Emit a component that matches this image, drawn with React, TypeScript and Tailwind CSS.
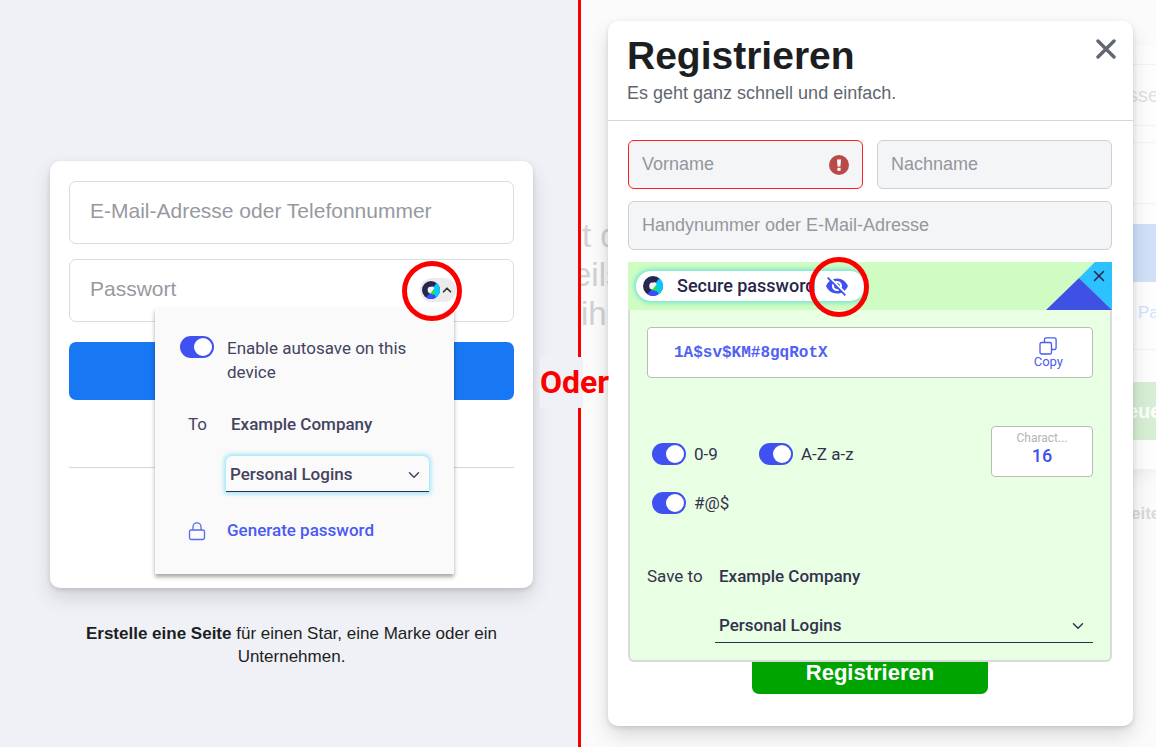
import React, { useState } from 'react';
import { ChevronDown, ChevronUp, X } from 'lucide-react';
import { MdVisibilityOff } from 'react-icons/md';

interface SwitchProps {
  id: string;
  label: string;
  className?: string;
}

const Switch: React.FC<SwitchProps> = ({ id, label, className = '' }) => {
  const [on, setOn] = useState(true);

  return (
    <div className={`flex ${className}`}>
      <input
        id={id}
        type="checkbox"
        role="switch"
        checked={on}
        onChange={() => setOn(!on)}
        className="w-[34px] h-[22px] shrink-0 appearance-none rounded-full bg-gray-400 checked:bg-[#3f51f0] before:block before:size-[18px] before:rounded-full before:bg-white before:m-[2px] checked:before:ml-[14px]"
      />
      <label htmlFor={id}>{label}</label>
    </div>
  );
};

const BrandIcon = ({ className = '' }: { className?: string }) => (
  <svg viewBox="0 0 20 20" className={className} aria-hidden="true">
    <circle cx="10" cy="10" r="10" fill="#26264f" />
    <path d="M10 10 L16.4 2.3 A10 10 0 0 1 15.6 18.3 Z" fill="#0dc5ff" />
    <path d="M10 12 L15.6 18.3 A10 10 0 0 1 4.4 18.3 Z" fill="#3f4bff" />
    <path d="M13.4 7 L14 15.5 L8 13.5 Z" fill="#1bea3c" />
    <path d="M7.6 6.8 L12.4 6.2 L13.6 8.4 L9.6 13.6 L6.6 12.4 L6.2 9 Z" fill="#f4f4f8" />
  </svg>
);

const ErrorIcon = () => (
  <svg viewBox="0 0 20 20" className="absolute right-[14px] top-[15px] size-5" aria-hidden="true">
    <circle cx="10" cy="10" r="10" fill="#b94a48" />
    <path d="M8 4.5h4l-.6 7H8.6z" fill="#fff" />
    <rect x="8.4" y="12.8" width="3.2" height="3" fill="#fff" />
  </svg>
);

const CopyIcon = () => (
  <svg viewBox="0 0 18 18" className="size-[18px]" fill="none" stroke="#4a5cf0" strokeWidth="1.3" aria-hidden="true">
    <rect x="1" y="5.5" width="11.5" height="11.5" rx="1.6" />
    <path d="M5.5 5.5V2.4A1.5 1.5 0 0 1 7 .9h8.6a1.5 1.5 0 0 1 1.5 1.5V11a1.5 1.5 0 0 1-1.5 1.5h-3.1" />
  </svg>
);

const LockIcon = () => (
  <svg viewBox="0 0 18 20" className="w-[18px] h-5" fill="none" stroke="#5a69f2" strokeWidth="1.3" aria-hidden="true">
    <rect x="1.5" y="9" width="15" height="9.5" rx="1.8" />
    <path d="M5 9V5.8a4 4 0 0 1 8 0V9" />
  </svg>
);

// red ring that highlights a control
const Ring = ({ className = '' }: { className?: string }) => (
  <span className={`absolute size-[60px] rounded-full border-5 border-[#fc0000] pointer-events-none ${className}`} />
);

const VaultSelect = ({ label, className = '' }: { label: string; className?: string }) => (
  <div className="relative">
    <select
      aria-label={label}
      className={`block w-full appearance-none border-b border-[#2f2d52] pl-1 font-medium outline-none ${className}`}
    >
      <option>Personal Logins</option>
    </select>
    <ChevronDown className="absolute right-[6px] top-[10px] size-[18px] pointer-events-none" strokeWidth={2} />
  </div>
);

const AutosavePopup = () => (
  <div className="absolute left-[105px] top-[147px] w-[299px] h-[266px] bg-[#fafafa] px-[25px] pt-[28px] shadow-[0_3px_4px_rgba(0,0,0,0.35)] font-[Roboto,sans-serif] text-[17px] leading-6 text-[#45435f]">
    <Switch id="autosave" label="Enable autosave on this device" className="gap-[13px]" />
    <div className="grid grid-cols-[46px_1fr] mt-[28px]">
      <span className="pl-2">To</span>
      <span className="pl-[5px] font-medium">Example Company</span>
    </div>
    <div className="ml-[46px] mt-5">
      <VaultSelect
        label="Vault"
        className="h-9 rounded-t-md bg-[#fafafa] shadow-[0_0_4px_2px_rgba(64,212,245,0.5)]"
      />
    </div>
    <button className="mt-[26px] grid grid-cols-[47px_auto] text-left font-medium text-[#4b5bf2]">
      <span className="pl-2 pt-[3px]"><LockIcon /></span>
      Generate password
    </button>
  </div>
);

const loginFieldClass =
  'block w-full h-[63px] rounded-[7px] border border-[#d9dce0] pl-5 pb-[3px] text-[21px] placeholder:text-[#97999f]';

const LoginSide = () => (
  <section className="w-1/2 bg-[#eff1f6] pt-[161px] pl-[50px] pr-[45px]">
    <div className="relative h-[427px] rounded-[10px] bg-white px-[19px] pt-5 shadow-[0_10px_20px_rgba(0,0,0,0.12),0_2px_5px_rgba(0,0,0,0.12)]">
      <input
        type="text"
        aria-label="E-Mail-Adresse oder Telefonnummer"
        placeholder="E-Mail-Adresse oder Telefonnummer"
        className={loginFieldClass}
      />
      <input
        type="password"
        aria-label="Passwort"
        placeholder="Passwort"
        className={`${loginFieldClass} mt-[15px]`}
      />
      <button aria-label="Anmelden" className="mt-5 block w-full h-[58px] rounded-[7px] bg-[#1877f2]" />
      <hr className="mt-[67px] border-[#d3d6da]" />

      <AutosavePopup />
      <button
        aria-label="Autosave"
        className="absolute right-[77px] top-[117px] flex h-6 w-9 items-center justify-center rounded-full bg-[#ebebeb]"
      >
        <BrandIcon className="size-[18px]" />
        <ChevronUp className="size-[14px] text-[#333]" strokeWidth={3} />
      </button>
      <Ring className="right-[71px] top-[100px]" />
    </div>

    <p className="mt-[34px] px-6 text-center text-[17px] leading-[23px] text-[#1c1e21]">
      <a href="#" className="font-bold">Erstelle eine Seite</a> für einen Star, eine Marke oder ein Unternehmen.
    </p>
  </section>
);

// faded login page behind the dialog
const Backdrop = () => (
  <div className="absolute inset-0 flex justify-between overflow-hidden bg-[#fbfbfb]" aria-hidden="true">
    <div className="w-8 whitespace-nowrap pt-[216px] text-[33px] leading-[39px] text-[#d0d1d2]">
      <p className="pl-px">t d</p>
      <p className="-ml-2">eils</p>
      <p>ihn</p>
    </div>
    <div className="w-9 pt-[45px] text-[20px] whitespace-nowrap">
      <div className="h-[424px] bg-[#fdfdfd] shadow-[0_8px_16px_rgba(0,0,0,0.05)]">
        <div className="pt-[19px]">
          <div className="h-[62px] border-y border-[#f3f3f4] pl-2 leading-[60px] text-[#dfe0e1]">sse</div>
          <div className="mt-4 h-[62px] border-y border-[#f3f3f4]" />
        </div>
        <div className="mt-5 h-[58px] bg-[#cfe0f8]" />
        <p className="mt-[19px] pl-[18px] text-[17px] leading-6 text-[#d0e3fc]">Pa</p>
        <div className="mt-6 border-t border-[#f3f3f4]" />
        <div className="mt-8 h-[58px] bg-[#d6efd4] pl-[7px] font-bold leading-[58px] text-white">eue</div>
      </div>
      <p className="mt-[33px] pl-[11px] text-[17px] leading-6 font-bold text-[#d8d9da]">eite</p>
    </div>
  </div>
);

const PasswordPanel = () => (
  <div className="relative z-10 mt-3 font-[Roboto,sans-serif] text-[17px] leading-6 text-[#33324e]">
    <div className="flex h-12 items-center justify-between bg-[#cffcc3] pl-2">
      <div className="flex h-[30px] w-[229px] items-center rounded-full bg-white pl-[7px] pr-4 shadow-[0_0_4px_2px_rgba(64,215,215,0.6)]">
        <BrandIcon className="size-5" />
        <span className="ml-[14px] flex-1 whitespace-nowrap text-[18px] font-medium text-[#26264a]">Secure password</span>
        <button aria-label="Hide"><MdVisibilityOff className="size-6 text-[#3f51f0]" /></button>
      </div>
      <button aria-label="Close" className="relative">
        <svg viewBox="0 0 66 48" className="h-12 w-[66px]" aria-hidden="true">
          <path d="M49 0H66V48L33 16Z" fill="#2bc2ff" />
          <path d="M33 16L66 48H0Z" fill="#3f51e5" />
        </svg>
        <X className="absolute right-1 top-[5px] size-[18px] text-[#26264a]" strokeWidth={2} />
      </button>
      <Ring className="left-[181px] top-[-5px]" />
    </div>

    <div className="rounded-b-md border-2 border-t-0 border-[#d8dbd8] bg-[#e9ffe4] px-[17px] pb-[17px] pt-[17px]">
      <div className="flex h-[51px] items-center justify-between rounded border border-[#b9bdb9] bg-white pl-[26px] pr-[29px]">
        <output className="font-['Liberation_Mono',monospace] text-[16px] font-bold text-[#5161f3]">1A$sv$KM#8gqRotX</output>
        <button className="flex flex-col items-center text-[13px] leading-[14px] text-[#4a5cf0]">
          <CopyIcon />
          Copy
        </button>
      </div>

      <div className="mt-12 flex items-start justify-between">
        <div className="grid grid-cols-[107px_1fr] pl-[5px] pt-[3px]">
          <Switch id="digits" label="0-9" className="h-[49px] items-center gap-2" />
          <Switch id="letters" label="A-Z a-z" className="h-[49px] items-center gap-2" />
          <Switch id="symbols" label="#@$" className="h-[49px] items-center gap-2" />
        </div>
        <div className="flex h-[51px] w-[102px] flex-col items-center rounded border border-[#b9bdb9] bg-white pt-[3px]">
          <label htmlFor="length" className="text-[12px] leading-4 text-[#b4b4b4]">Charact...</label>
          <input
            id="length"
            type="text"
            defaultValue="16"
            className="w-full text-center text-[18px] leading-5 font-medium text-[#3f51f0]"
          />
        </div>
      </div>

      <div className="mt-[37px] grid grid-cols-[68px_1fr] gap-y-[19px]">
        <span>Save to</span>
        <span className="pl-1 font-medium">Example Company</span>
        <div className="col-start-2">
          <VaultSelect label="Save to" className="h-9" />
        </div>
      </div>
    </div>
  </div>
);

const fieldClass =
  'block w-full h-[49px] rounded-md border border-[#ccd0d5] bg-[#f4f5f7] px-[13px] text-[18px] placeholder:text-[#94979d]';

const RegisterSide = () => (
  <section className="relative w-1/2 border-l-[3px] border-[#fc0000] pl-[27px] pr-[23px] pt-[21px] pb-[21px]">
    <Backdrop />
    <div className="relative rounded-[10px] bg-white shadow-[0_10px_20px_rgba(0,0,0,0.13),0_2px_5px_rgba(0,0,0,0.12)]">
      <header className="flex items-start justify-between border-b border-[#d3d6db] pl-[19px] pr-4 pt-3 h-[100px]">
        <div>
          <h1 className="text-[39px] leading-[46px] font-bold text-[#1c1e21]">Registrieren</h1>
          <p className="mt-[2px] text-[18px] leading-6 text-[#606770]">Es geht ganz schnell und einfach.</p>
        </div>
        <button aria-label="Schließen" className="text-[#606770]">
          <svg viewBox="0 0 20 20" className="m-[1px] mt-[6px] size-5" stroke="currentColor" strokeWidth="3.4" strokeLinecap="round" aria-hidden="true">
            <path d="M2 2L18 18M18 2L2 18" />
          </svg>
        </button>
      </header>

      <form className="pl-5 pr-[21px] pb-8 pt-[19px]" onSubmit={(e) => e.preventDefault()}>
        <div className="grid grid-cols-2 gap-[14px]">
          <div className="relative">
            <input type="text" aria-label="Vorname" placeholder="Vorname" className={`${fieldClass} border-[#fb2020]!`} />
            <ErrorIcon />
          </div>
          <input type="text" aria-label="Nachname" placeholder="Nachname" className={fieldClass} />
        </div>
        <input
          type="text"
          aria-label="Handynummer oder E-Mail-Adresse"
          placeholder="Handynummer oder E-Mail-Adresse"
          className={`${fieldClass} mt-3`}
        />
        <PasswordPanel />
        <button
          type="submit"
          className="relative mx-auto -mt-3 block h-[44px] w-[236px] rounded-[7px] bg-[#00a400] text-[22px] font-bold text-white"
        >
          Registrieren
        </button>
      </form>
    </div>
  </section>
);

export default function App() {
  return (
    <main className="relative flex min-h-screen font-['Liberation_Sans',Arial,sans-serif]">
      <LoginSide />
      <RegisterSide />
      <div className="absolute left-[calc(50%-38px)] top-[357px] w-[43px] bg-[#eff1f6] font-[Roboto,sans-serif] text-[32px] leading-[51px] font-bold text-[#fc0000]">
        Oder
      </div>
    </main>
  );
}
